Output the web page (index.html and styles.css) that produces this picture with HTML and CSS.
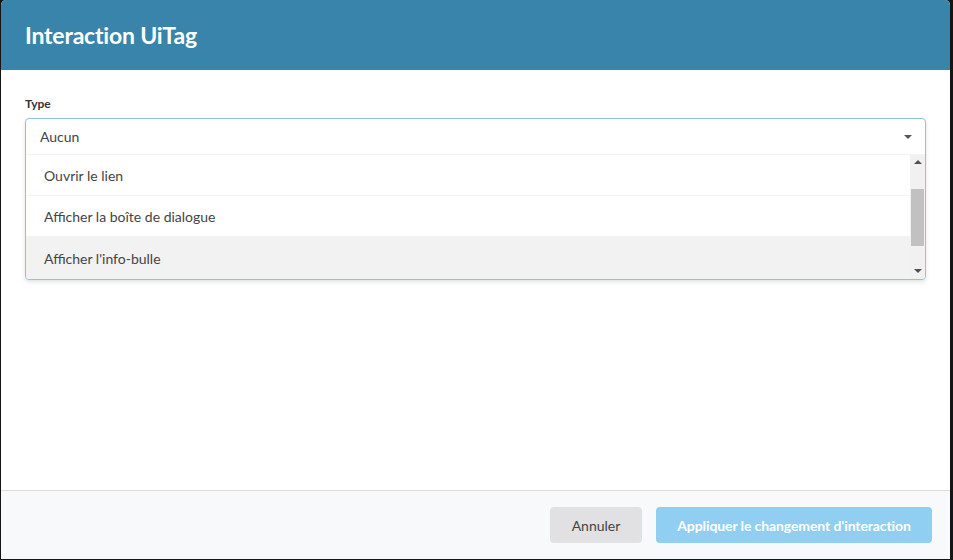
FILE: index.html
```html
<!DOCTYPE html>
<html lang="fr">
<head>
<meta charset="utf-8">
<title>Interaction UiTag</title>
<link rel="stylesheet" href="styles.css">
</head>
<body>
<div class="dialog">
  <header class="dlg-header">
    <h1 class="dlg-title">Interaction UiTag</h1>
  </header>
  <main class="dlg-body">
    <label class="field-label">Type</label>
    <div class="select open">
      <div class="select-value">
        <span>Aucun</span>
        <span class="caret"></span>
      </div>
      <div class="options">
        <ul class="option-list">
          <li class="option">Ouvrir le lien</li>
          <li class="option">Afficher la boîte de dialogue</li>
          <li class="option hover">Afficher l'info-bulle</li>
        </ul>
        <div class="scrollbar">
          <span class="arrow up"></span>
          <span class="thumb"></span>
          <span class="arrow down"></span>
        </div>
      </div>
    </div>
  </main>
  <footer class="dlg-footer">
    <button class="btn btn-cancel">Annuler</button>
    <button class="btn btn-primary">Appliquer le changement d'interaction</button>
  </footer>
</div>
</body>
</html>
```

FILE: styles.css
```css
* { box-sizing: border-box; }
html, body { margin: 0; height: 100%; }
body {
  background: #151515;
  font-family: Lato, "Open Sans", sans-serif;
  overflow: hidden;
}
.dialog {
  margin-left: 1px;
  width: 949px;
  height: 559px;
  background: #fff;
  border-radius: 5px 5px 0 0;
  overflow: hidden;
  display: flex;
  flex-direction: column;
}
.dlg-header {
  height: 70px;
  background: #3884aa;
  display: flex;
  align-items: center;
  padding: 0 24px;
  flex: none;
}
.dlg-title {
  margin: 0;
  color: #fff;
  font-size: 23px;
  font-weight: 700;
  letter-spacing: -0.2px;
}
.dlg-body {
  flex: 1;
  padding: 26px 24px 0 24px;
}
.field-label {
  display: block;
  font-size: 12px;
  font-weight: 700;
  color: #333;
  margin-bottom: 7px;
}
.select {
  border: 1px solid #8ec3d8;
  border-radius: 4px;
  box-shadow: 0 2px 4px rgba(0,0,0,0.12);
  background: #fff;
  overflow: hidden;
}
.select-value {
  height: 36px;
  display: flex;
  align-items: center;
  justify-content: space-between;
  padding: 0 13px 0 14px;
  font-size: 14px;
  color: #444;
  border-bottom: 1px solid #f3f3f3;
}
.select-value span:first-child { margin-top: -1px; }
.caret {
  width: 0; height: 0;
  border-left: 4px solid transparent;
  border-right: 4px solid transparent;
  border-top: 4px solid #555;
}
.options {
  display: flex;
  height: 124px;
}
.option-list {
  list-style: none;
  margin: 0;
  padding: 0;
  flex: 1;
}
.option {
  height: 41px;
  display: flex;
  align-items: center;
  padding-left: 18px;
  font-size: 14px;
  color: #444;
  border-bottom: 1px solid #f3f3f3;
}
.option.hover { background: #f2f2f2; border-bottom: none; height: 42px; }
.scrollbar {
  width: 15px;
  background: #f1f1f1;
  display: flex;
  flex-direction: column;
  align-items: center;
}
.arrow {
  width: 0; height: 0;
  border-left: 4px solid transparent;
  border-right: 4px solid transparent;
  margin: 5px 0;
}
.arrow.up { border-bottom: 4px solid #505050; }
.arrow.down { border-top: 4px solid #505050; margin-top: auto; margin-bottom: 6px; }
.thumb {
  width: 13px;
  height: 57px;
  background: #c1c1c1;
  margin-top: 20px;
}
.dlg-footer {
  height: 69px;
  flex: none;
  background: #f8f9fa;
  border-top: 1px solid #dcdcdc;
  display: flex;
  justify-content: flex-end;
  align-items: flex-start;
  gap: 14px;
  padding: 16px 18px 0 0;
}
.btn {
  height: 36px;
  border: none;
  border-radius: 4px;
  font-family: Lato, "Open Sans", sans-serif;
  font-size: 14px;
  padding: 0;
  white-space: nowrap;
}
.btn-cancel {
  width: 92px;
  background: #e1e1e3;
  color: #444;
}
.btn-primary {
  width: 276px;
  background: #90cff1;
  color: #fff;
  font-weight: 700;
  letter-spacing: -0.1px;
}
```
